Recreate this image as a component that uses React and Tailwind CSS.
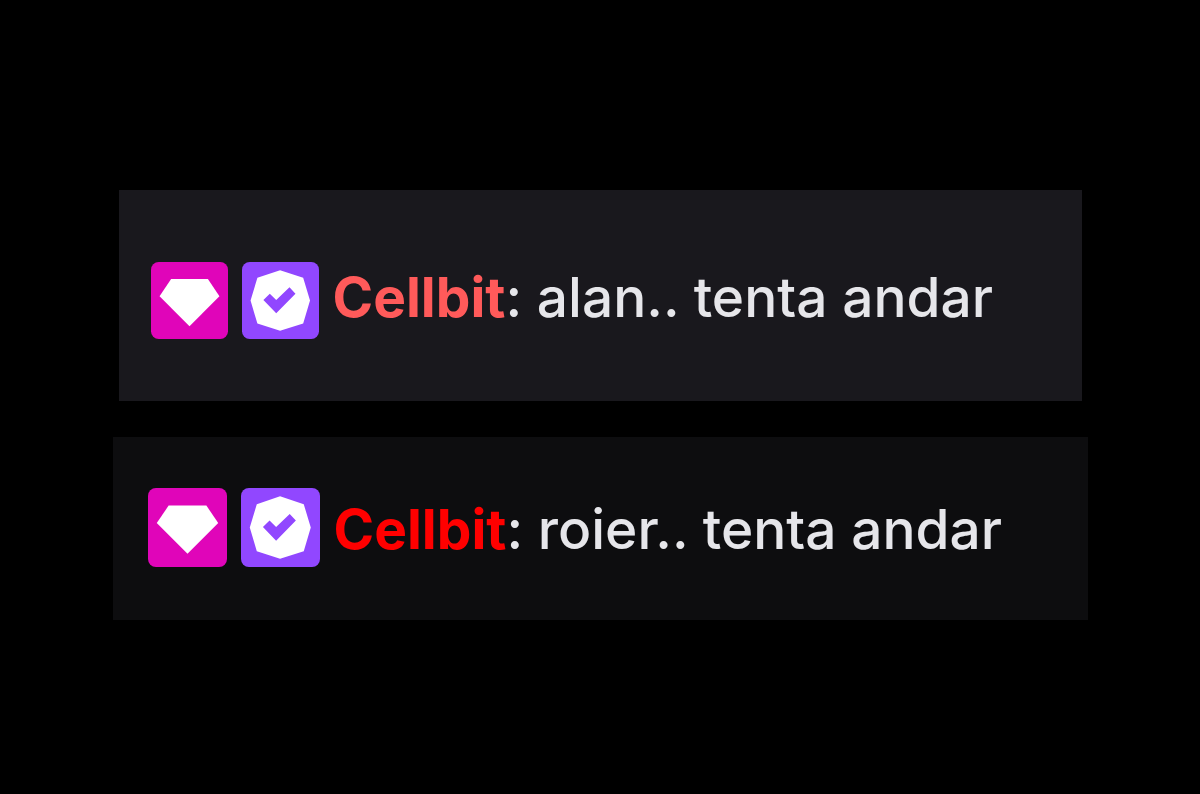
import React from 'react';

function DiamondBadge({ className }) {
  return (
    <svg viewBox="0 0 18 18" className={className} role="img" aria-label="Subscriber">
      <rect width="18" height="18" rx="1.8" fill="#e005b9" />
      <path d="M4.7 4h8.6L16 8l-7 7-7-7z" fill="#fff" />
    </svg>
  );
}

function VerifiedBadge({ className }) {
  return (
    <svg viewBox="0 0 18 18" className={className} role="img" aria-label="Verified">
      <rect width="18" height="18" rx="1.8" fill="#9147ff" />
      <path
        fillRule="evenodd"
        fill="#fff"
        d="M8.9 1.9l5.4 1.8L15.9 9l-1.6 5.4-5.4 1.7-5.3-1.7L2 9l1.6-5.3zM5 8.9l3 3.1 4.5-4.6-1.4-1.5L8 8.9 6.5 7.4z"
      />
    </svg>
  );
}

export default function App() {
  return (
    <main className="min-h-screen bg-black flex flex-col items-center gap-9 pt-[190px] font-['Inter',sans-serif] text-[#e6e6ea]">
      {/* Old chat style */}
      <div className="w-[80.25%] bg-[#19181d] px-8 pt-[72px] pb-[62px] flex items-center gap-[14px]">
        <DiamondBadge className="size-[77px] shrink-0" />
        <VerifiedBadge className="size-[77px] shrink-0" />
        <p className="text-[55px] leading-[64px] pb-2 font-medium whitespace-nowrap">
          <span className="font-bold text-[#ff5a5a]">Cellbit</span>: alan.. tenta andar
        </p>
      </div>

      {/* New chat style */}
      <div className="w-[81.25%] bg-[#0d0d0f] px-[35px] pt-[51px] pb-[53px] flex items-center gap-[14px]">
        <DiamondBadge className="size-[79px] shrink-0" />
        <VerifiedBadge className="size-[79px] shrink-0" />
        <p className="text-[55px] leading-[64px] pt-[2px] font-medium whitespace-nowrap">
          <span className="font-bold text-[#ff0000]">Cellbit</span>: roier.. tenta andar
        </p>
      </div>
    </main>
  );
}
